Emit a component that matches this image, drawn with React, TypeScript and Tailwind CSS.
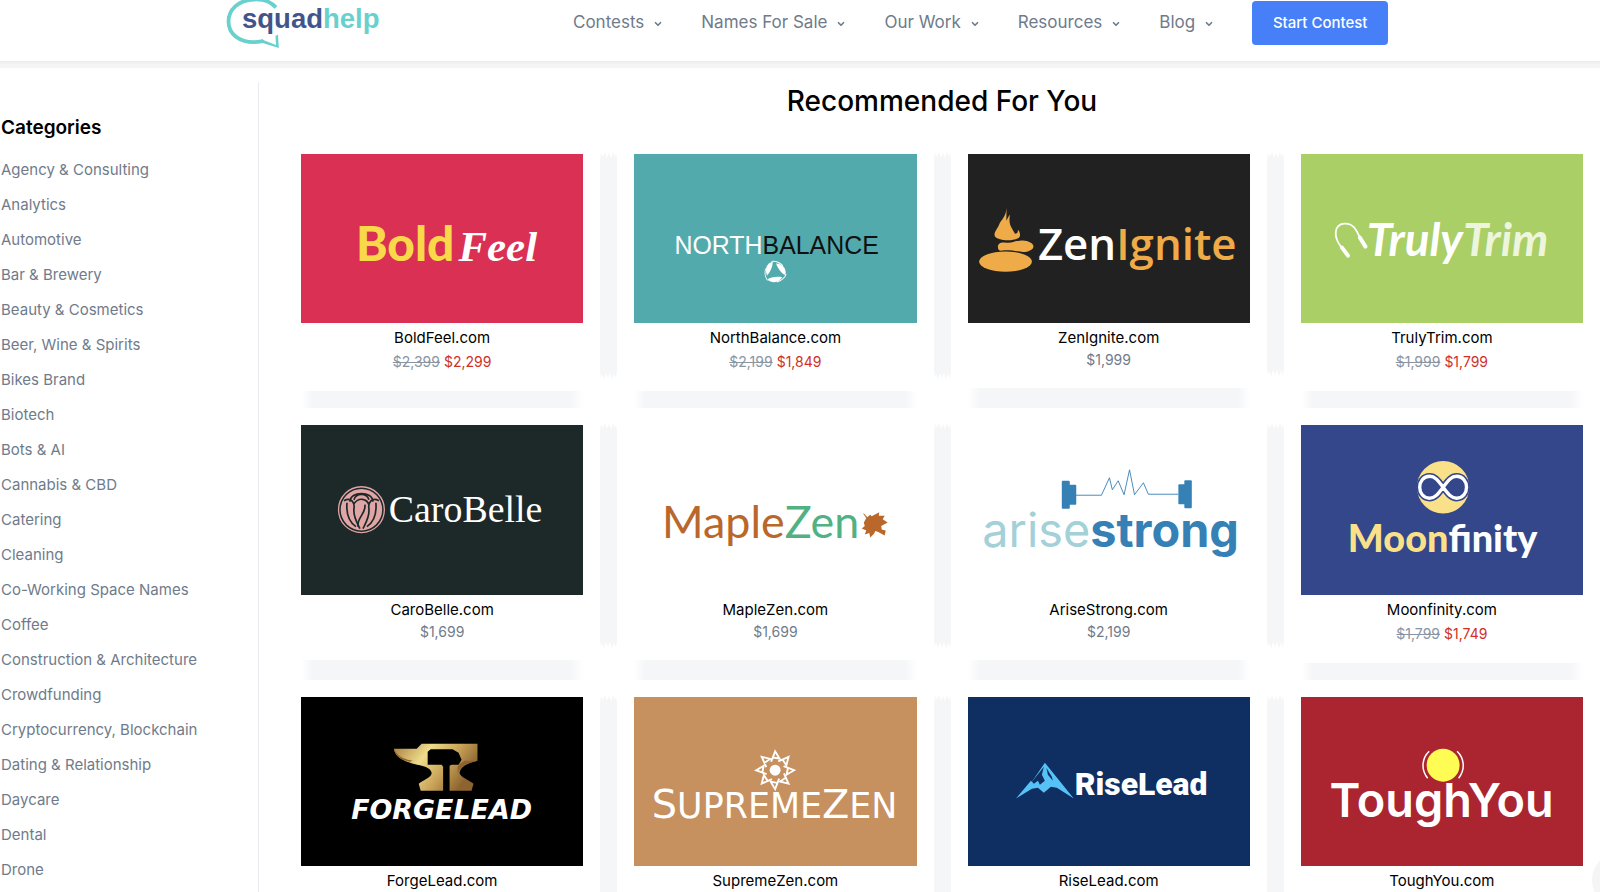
import type { ReactNode } from "react";
import { ChevronDown } from "lucide-react";

const navItems = ["Contests", "Names For Sale", "Our Work", "Resources", "Blog"];

const categories = [
  "Agency & Consulting",
  "Analytics",
  "Automotive",
  "Bar & Brewery",
  "Beauty & Cosmetics",
  "Beer, Wine & Spirits",
  "Bikes Brand",
  "Biotech",
  "Bots & AI",
  "Cannabis & CBD",
  "Catering",
  "Cleaning",
  "Co-Working Space Names",
  "Coffee",
  "Construction & Architecture",
  "Crowdfunding",
  "Cryptocurrency, Blockchain",
  "Dating & Relationship",
  "Daycare",
  "Dental",
  "Drone",
];

function SquadhelpLogo() {
  return (
    <svg viewBox="0 0 156 48" className="h-12 w-[156px]" role="img" aria-label="squadhelp">
      <path
        d="M50 7.500C44 1 35-1 28-.5C12 0 2.500 10 2.500 21.500C2.500 34 13 42 28 42.200C32 42.200 35 41.500 37.500 41"
        fill="none"
        stroke="#68d1cd"
        strokeWidth="3.800"
      />
      <path d="M36 39.500L50 45L49.500 36L52 34.500L52.800 48L35 42.500Z" fill="#68d1cd" />
      <text x="16" y="28" fontSize="27.500" fontWeight="700" className="font-['Liberation_Sans',sans-serif]">
        <tspan fill="#43548a">squad</tspan>
        <tspan fill="#68d1cd">help</tspan>
      </text>
    </svg>
  );
}

const logos: Record<string, ReactNode> = {
  BoldFeel: (
    <>
      <text x="55" y="107" fontSize="48" fontWeight="900" fill="#f9d949" className="font-[Lato,sans-serif]">
        Bold
      </text>
      <text x="158" y="107" fontSize="43" fontStyle="italic" fontWeight="700" fill="#fff" className="font-['Liberation_Serif',serif]">
        Feel
      </text>
    </>
  ),
  NorthBalance: (
    <>
      <text x="143" y="100" fontSize="25" textAnchor="middle" className="font-['Liberation_Sans',sans-serif]">
        <tspan fill="#fff">NORTH</tspan>
        <tspan fill="#111">BALANCE</tspan>
      </text>
      <g fill="#fff">
        {[0, 120, 240].map((a) => (
          <g key={a} transform={`rotate(${a} 141.500 118.500)`}>
            <path d="M133 121C131 115 133 110 139 108C139.500 112 137 118 133.500 122Z" />
            <path d="M134 127C131 123 131 119 132 115" fill="none" stroke="#fff" strokeWidth=".9" />
          </g>
        ))}
      </g>
    </>
  ),
  ZenIgnite: (
    <>
      <g fill="#efab47">
        <ellipse cx="37.500" cy="108" rx="26.500" ry="10.200" />
        <path d="M30 94C29 90 33 88 38 89C44 90 46 87 52 87C60 86 66 90 65.500 93C65 97 58 99 52 98C46 97 40 96 33 97C31 97 30 96 30 94Z" />
        <path d="M38 54C39 62 33 66 31 71C29 76 25 79 27 83C31 87 44 88 51 84C53 82 52 78 50 76C50 79 49 80 47 80C44 74 40 71 42 61C40 63 39.500 65 38.500 67C38 62 39 58 38 54Z" />
      </g>
      <text x="70" y="106" fontSize="44" fontWeight="600" className="font-['Open_Sans',sans-serif]">
        <tspan fill="#fff">Zen</tspan>
        <tspan fill="#efab47">Ignite</tspan>
      </text>
    </>
  ),
  TrulyTrim: (
    <>
      <g fill="none" stroke="#fff" strokeLinecap="round">
        <path d="M40 93C32 83 33 71 43 70C53 69 56 78 59 84" strokeWidth="1.800" />
        <path d="M41 94L47 102M59 84L64.500 93" strokeWidth="4" />
      </g>
      <text x="157" y="102" fontSize="46" fontStyle="italic" fontWeight="700" textAnchor="middle" className="font-[Lato,sans-serif]">
        <tspan fill="#fff">Truly</tspan>
        <tspan fill="#edf5dc">Trim</tspan>
      </text>
    </>
  ),
  CaroBelle: (
    <>
      <circle cx="60.500" cy="85" r="23" fill="none" stroke="#e0a5a5" strokeWidth="1.300" />
      <circle cx="60.500" cy="85" r="20.800" fill="#e0a5a5" />
      <g fill="none" stroke="#1d2829" strokeWidth="1.700">
        <path d="M43 76C50 72 54 78 53 84C52 92 56 98 59 104M78 76C71 72 67 78 68 84C69 92 65 98 62 104" />
        <path d="M49 77C49 66 72 66 72 77M53 75C55 68 66 68 68 75M53 79C58 72 66 74 68 80" />
        <path d="M46 78C45 90 49 98 55 102M75 78C76 90 72 98 66 102M57 102C56 92 65 90 64 80" />
      </g>
      <text x="88" y="97" fontSize="38" fill="#fff" className="font-['Liberation_Serif',serif]">
        CaroBelle
      </text>
    </>
  ),
  MapleZen: (
    <>
      <text x="28" y="113" fontSize="45" fontWeight="400" className="font-[Lato,sans-serif]">
        <tspan fill="#b9672a">Maple</tspan>
        <tspan fill="#52b182">Zen</tspan>
      </text>
      <path
        d="M230.500 88.500L234 92.500L237 90L238.500 91.500L246 87.500L245.500 91L251.500 91L249.500 94.500L254.500 98L248 101.500L248.500 105L252.500 106L251.500 111L245 107.500L242 106.500L241 109L237 113L236 108.500L231.500 110L233 106L228.500 104L231.500 101.500L230.500 98L233 93.500L230 89Z"
        fill="#b9672a"
      />
    </>
  ),
  AriseStrong: (
    <>
      <g fill="#3580b5">
        <rect x="94" y="56" width="8" height="28" rx="1" />
        <rect x="101" y="60" width="7.500" height="20" rx="1" />
        <rect x="217" y="55.500" width="7.500" height="28" rx="1" />
        <rect x="211" y="59.500" width="7" height="20" rx="1" />
      </g>
      <path
        d="M108 70.500H133.800L141.800 53L144.700 65L150.600 56L156.500 70L162 45L167 70L175.900 58L180.900 69.500H211"
        fill="none"
        stroke="#3580b5"
        strokeWidth=".9"
      />
      <text x="143" y="122" fontSize="47" textAnchor="middle" className="font-[Inter,sans-serif]">
        <tspan fill="#a4d0d8">arise</tspan>
        <tspan fill="#3580b5" fontWeight="700">strong</tspan>
      </text>
    </>
  ),
  Moonfinity: (
    <>
      <circle cx="142.500" cy="62.500" r="26.300" fill="#fbe08a" />
      <path
        d="M142.500 62.500C137 55 134 51.500 129 51.500C122.500 51.500 119 57 119 62.500C119 68 122.500 73.500 129 73.500C134 73.500 137 70 142.500 62.500C148 55 151 51.500 156 51.500C162.500 51.500 166 57 166 62.500C166 68 162.500 73.500 156 73.500C151 73.500 148 70 142.500 62.500Z"
        fill="#33478a"
        stroke="#33478a"
        strokeWidth="6.500"
      />
      <path
        d="M142.500 62.500C137 55 134 51.500 129 51.500C122.500 51.500 119 57 119 62.500C119 68 122.500 73.500 129 73.500C134 73.500 137 70 142.500 62.500C148 55 151 51.500 156 51.500C162.500 51.500 166 57 166 62.500C166 68 162.500 73.500 156 73.500C151 73.500 148 70 142.500 62.500Z"
        fill="none"
        stroke="#fff"
        strokeWidth="3.400"
      />
      <text x="142" y="127" fontSize="38" fontWeight="900" textAnchor="middle" className="font-[Lato,sans-serif]">
        <tspan fill="#fbe08a">Moon</tspan>
        <tspan fill="#fff">finity</tspan>
      </text>
    </>
  ),
  ForgeLead: (
    <>
      <defs>
        <linearGradient id="gold" x1="0" y1="0" x2="1" y2=".4">
          <stop offset="0" stopColor="#a67c3c" />
          <stop offset=".4" stopColor="#efdc8c" />
          <stop offset=".7" stopColor="#c9a458" />
          <stop offset="1" stopColor="#8d6430" />
        </linearGradient>
      </defs>
      <path
        d="M93 52H116L121 47H177V64C167 66 160 70 159 76C159 80 168 83 173 87L171 94H149V69L151 68H158L161 63L158 56L152 52.500H130L127 55V68H141L142.500 70V94H120L118 87C123 83 131 81 131 76C129 68 114 69 104 64C97 61 94 57 93 52Z"
        fill="url(#gold)"
      />
      <path d="M93 52C97 61 106 63 112 64L109 65C99 63 94 58 93 52Z" fill="#8d6430" />
      <path d="M177 64C165 67 158 71 157 78C158 72 154 70 164 64Z" fill="#8d6430" />
      <text x="141" y="122" fontSize="27" fontStyle="italic" fontWeight="700" fill="#fff" textAnchor="middle" className="font-['DejaVu_Sans',sans-serif]">
        FORGELEAD
      </text>
    </>
  ),
  SupremeZen: (
    <>
      <g fill="none" stroke="#fff" strokeWidth="1.900">
        {[0, 45, 90, 135, 180, 225, 270, 315].map((a) => (
          <path key={a} d="M137.500 65L141.500 54.500L146 62L138.500 60.500" transform={`rotate(${a} 141.500 73.500)`} />
        ))}
      </g>
      <circle cx="141.500" cy="73.500" r="5.500" fill="#fff" />
      <text x="141" y="121" fill="#fff" textAnchor="middle" className="font-['DejaVu_Sans',sans-serif]">
        <tspan fontSize="40">S</tspan>
        <tspan fontSize="35">UPREME</tspan>
        <tspan fontSize="40">Z</tspan>
        <tspan fontSize="35">EN</tspan>
      </text>
    </>
  ),
  RiseLead: (
    <>
      <path d="M77 66L106 102L89 91L83 90L76 96L70 91L64 92L48 102L63 84L64 85Z" fill="#57c2f5" />
      <path d="M76 70L74 78L77 84L72 88L70 84L66 87L64 85Z M78.500 71L84 80L85 84L80 78Z" fill="#0f2f63" />
      <text x="107" y="98" fontSize="32" fontWeight="900" fill="#fff" className="font-[Roboto,sans-serif]">
        RiseLead
      </text>
    </>
  ),
  ToughYou: (
    <>
      <circle cx="142.500" cy="68.500" r="16.500" fill="#fffd54" />
      <path d="M128.500 54.500C120.500 62 120.500 74 127 81.500M156.500 54.500C164.500 62 164.500 74 158 81.500" fill="none" stroke="#fff" strokeWidth="1.500" />
      <text x="141" y="120" fontSize="47" fontWeight="600" fill="#fff" textAnchor="middle" className="font-[Inter,sans-serif]">
        ToughYou
      </text>
    </>
  ),
};

type Domain = { name: string; bg: string; price?: string; was?: string };

const domains: Domain[] = [
  { name: "BoldFeel", bg: "bg-[#d93053]", was: "$2,399", price: "$2,299" },
  { name: "NorthBalance", bg: "bg-[#53aaad]", was: "$2,199", price: "$1,849" },
  { name: "ZenIgnite", bg: "bg-[#212121]", price: "$1,999" },
  { name: "TrulyTrim", bg: "bg-[#a9cf66]", was: "$1,999", price: "$1,799" },
  { name: "CaroBelle", bg: "bg-[#1d2829]", price: "$1,699" },
  { name: "MapleZen", bg: "bg-white", price: "$1,699" },
  { name: "AriseStrong", bg: "bg-white", price: "$2,199" },
  { name: "Moonfinity", bg: "bg-[#33478a]", was: "$1,799", price: "$1,749" },
  { name: "ForgeLead", bg: "bg-black" },
  { name: "SupremeZen", bg: "bg-[#c6905f]" },
  { name: "RiseLead", bg: "bg-[#0f2f63]" },
  { name: "ToughYou", bg: "bg-[#ab2530]" },
];

function Spikes({ className }: { className: string }) {
  return (
    <svg viewBox="0 0 17 8" className={className} fill="#f5f6f8" aria-hidden="true">
      <path d="M0 8L1 1L3 5L5 0L7 6L9 1L11 6L13 0L15 5L16 1L17 8Z" />
    </svg>
  );
}

function DomainCard({ domain }: { domain: Domain }) {
  const { name, bg, price, was } = domain;
  return (
    <li className="grid grid-cols-[1fr_17px]">
      <a href={`#${name}`} className="flex flex-col px-[17px] pt-[17px] text-center leading-5">
        <svg viewBox="0 0 283 170" className={`aspect-[5/3] w-full ${bg}`} role="img" aria-label={`${name} logo`}>
          {logos[name]}
        </svg>
        <span className="pt-[5px] text-[15px] text-black">{name}.com</span>
        {was ? (
          <span className="flex justify-center gap-1 pt-1 pb-[19px] text-sm leading-5">
            <s className="text-[#8a95a3]">{was}</s>
            <span className="text-[#d0301f]">{price}</span>
          </span>
        ) : (
          <span className="h-10 pt-[2px] text-sm leading-5 text-[#6f7b8b]">{price}</span>
        )}
      </a>
      <div className="mt-[15px] mb-3 flex flex-col">
        <Spikes className="h-2 w-full" />
        <div className="flex-1 bg-[#f5f6f8]" />
        <Spikes className="h-2 w-full rotate-180" />
      </div>
      <div
        className={`mx-[17px] bg-[linear-gradient(to_right,transparent,#f5f6f8_12px,#f5f6f8_calc(100%-12px),transparent)] ${was ? "h-[17px]" : "h-5"}`}
      />
    </li>
  );
}

export default function App() {
  return (
    <div className="flex h-screen flex-col overflow-hidden bg-white font-[Inter,sans-serif]">
      <header className="flex h-[61px] shrink-0 items-start pl-[226px]">
        <a href="#home">
          <SquadhelpLogo />
        </a>
        <nav className="ml-[191px] flex items-center gap-[38px] pt-[9px]">
          {navItems.map((item) => (
            <button key={item} type="button" className="flex items-center gap-[9px] text-[17px] leading-[26px] text-[#6f7b8b]">
              {item}
              <ChevronDown className="mt-1 size-[10px]" strokeWidth={4} />
            </button>
          ))}
        </nav>
        <button
          type="button"
          className="mt-px ml-[38px] h-11 w-[136px] rounded bg-[#467ff7] text-[15px] font-medium text-white"
        >
          Start Contest
        </button>
      </header>
      <div className="h-[7px] shrink-0 bg-linear-to-b from-[#ebebeb] to-[#f5f5f5] to-50%" />

      <div className="flex min-h-0 flex-1">
        <aside className="mt-[14px] w-[259px] shrink-0 border-r border-[#e8eaf0] pt-[33px] pl-px">
          <h2 className="text-[19px] leading-[26px] font-semibold text-black">Categories</h2>
          <ul className="pt-[11px] text-[15px] leading-[35px] text-[#6f7b8b]">
            {categories.map((category) => (
              <li key={category}>
                <a href="#categories">{category}</a>
              </li>
            ))}
          </ul>
        </aside>

        <main className="min-w-0 flex-1 overflow-hidden pl-[25px]">
          <h1 className="pt-[17px] pb-5 text-center text-[28px] leading-8 font-medium text-black">Recommended For You</h1>
          <ul className="-mr-[17px] grid grid-cols-4">
            {domains.map((domain) => (
              <DomainCard key={domain.name} domain={domain} />
            ))}
          </ul>
        </main>
      </div>
      <div className="fixed -right-12 -bottom-4 size-14 rounded-full bg-[#f5f5f5]" />
    </div>
  );
}
